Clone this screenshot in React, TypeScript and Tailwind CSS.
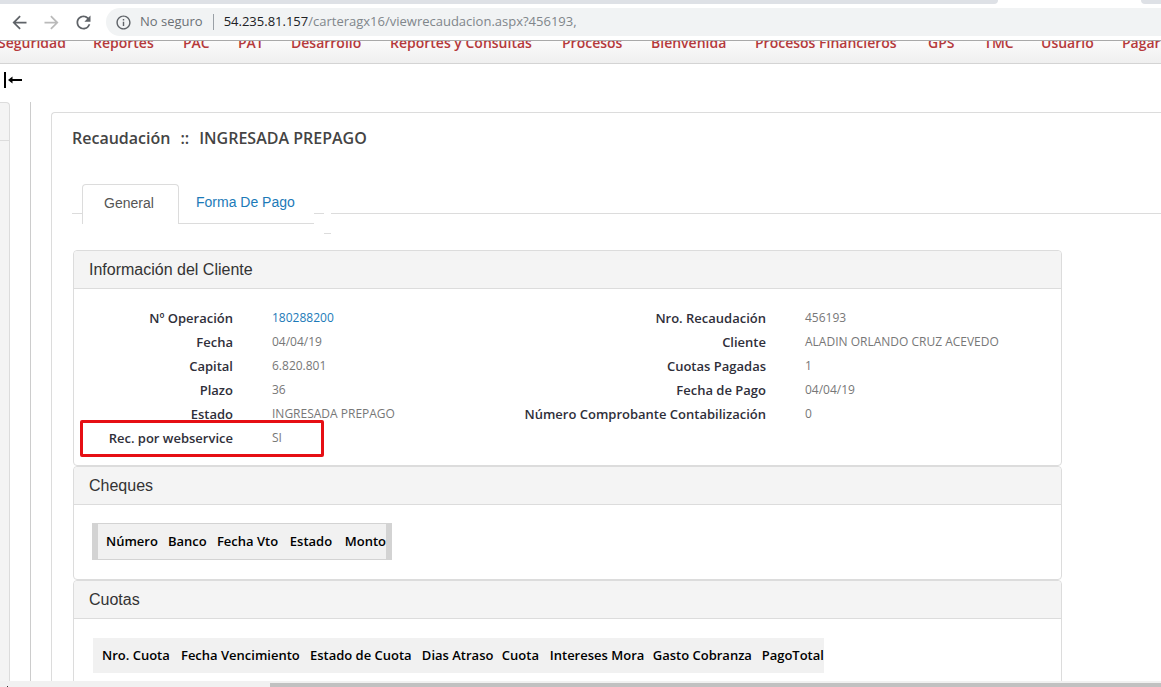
import { MdArrowBack, MdArrowForward, MdInfoOutline, MdRefresh } from "react-icons/md";
import type { ReactNode } from "react";

const menu = [
  "Seguridad",
  "Reportes",
  "PAC",
  "PAT",
  "Desarrollo",
  "Reportes y Consultas",
  "Procesos",
  "Bienvenida",
  "Procesos Financieros",
  "GPS",
  "TMC",
  "Usuario",
  "Pagaré",
];

type Field = { label: string; value: string; link?: boolean; marked?: boolean };

const leftFields: Field[] = [
  { label: "Nº Operación", value: "180288200", link: true },
  { label: "Fecha", value: "04/04/19" },
  { label: "Capital", value: "6.820.801" },
  { label: "Plazo", value: "36" },
  { label: "Estado", value: "INGRESADA PREPAGO" },
  { label: "Rec. por webservice", value: "SI", marked: true },
];

const rightFields: Field[] = [
  { label: "Nro. Recaudación", value: "456193" },
  { label: "Cliente", value: "ALADIN ORLANDO CRUZ ACEVEDO" },
  { label: "Cuotas Pagadas", value: "1" },
  { label: "Fecha de Pago", value: "04/04/19" },
  { label: "Número Comprobante Contabilización", value: "0" },
];

const chequeColumns = [
  { name: "Número", width: "w-[62px]" },
  { name: "Banco", width: "w-[49px]" },
  { name: "Fecha Vto", width: "w-[73px]" },
  { name: "Estado", width: "w-[55px]" },
  { name: "Monto", width: "w-[41px]" },
];

const cuotaColumns = [
  { name: "Nro. Cuota", width: "w-[79px]" },
  { name: "Fecha Vencimiento", width: "w-[129px]" },
  { name: "Estado de Cuota", width: "w-[112px]" },
  { name: "Dias Atraso", width: "w-[80px]" },
  { name: "Cuota", width: "w-[48px]" },
  { name: "Intereses Mora", width: "w-[103px]" },
  { name: "Gasto Cobranza", width: "w-[109px]" },
  { name: "PagoTotal", width: "w-[62px]" },
];

function BrowserBar() {
  return (
    <header className="shrink-0 border-b border-[#a9a9a9] bg-white">
      <div className="flex h-1 justify-between">
        <div className="w-[998px] rounded-br-lg bg-[#dee1e6]" />
        <div className="w-5 rounded-bl-lg bg-[#dee1e6]" />
      </div>
      <div className="flex h-9 items-center pl-[9px]">
        <button type="button" aria-label="Atrás" className="mr-[11px] text-[#5f6368]">
          <MdArrowBack size={21} />
        </button>
        <button type="button" aria-label="Adelante" className="mr-[11px] text-[#bababa]">
          <MdArrowForward size={21} />
        </button>
        <button type="button" aria-label="Recargar" className="mr-3 text-[#5f6368]">
          <MdRefresh size={21} />
        </button>
        <div className="flex h-7 flex-1 items-center rounded-l-full bg-[#f1f3f4] pl-[9px] font-['Open_Sans',sans-serif] text-[13px] text-[#80868b]">
          <MdInfoOutline size={17} className="text-[#5f6368]" />
          <span className="ml-2 text-[#6b7075]">No seguro</span>
          <span className="mx-[10px] h-4 w-px bg-[#9aa0a6]" />
          <label htmlFor="url" className="text-[#202124]">
            54.235.81.157
          </label>
          <input
            id="url"
            type="text"
            defaultValue="/carteragx16/viewrecaudacion.aspx?456193,"
            className="min-w-0 flex-1 bg-transparent outline-none"
          />
        </div>
      </div>
    </header>
  );
}

function Menu() {
  return (
    <nav className="h-[23px] shrink-0 overflow-hidden border-b border-[#d4d4d4] bg-linear-to-b from-[#fbfbfb] to-[#efefef]">
      <ul className="-mt-2 -ml-[2px] grid grid-cols-[95px_90px_55px_53px_99px_172px_89px_104px_173px_56px_57px_81px_80px] text-sm leading-5 font-semibold whitespace-nowrap text-[#b5393b]">
        {menu.map((item) => (
          <li key={item}>
            <a href="#">{item}</a>
          </li>
        ))}
      </ul>
    </nav>
  );
}

function Fields({ items, columns }: { items: Field[]; columns: string }) {
  return (
    <dl className={columns}>
      {items.map((f) => (
        <div key={f.label} className="relative col-span-2 grid grid-cols-subgrid leading-6">
          <dt className="text-right text-[13px] font-semibold whitespace-nowrap text-[#2f2f3a]">{f.label}</dt>
          <dd className="text-xs leading-6 whitespace-nowrap text-[#777]">
            {f.link ? (
              <a href="#" className="text-[#1c7ab8]">
                {f.value}
              </a>
            ) : (
              f.value
            )}
          </dd>
          {f.marked && (
            <span className="absolute -top-[6px] left-[6px] h-[37px] w-[244px] rounded-xs border-3 border-[#e60f14]" />
          )}
        </div>
      ))}
    </dl>
  );
}

function Panel({ title, children }: { title: string; children: ReactNode }) {
  return (
    <section className="rounded border border-[#dcdcdc] bg-white">
      <h2 className="h-[38px] rounded-t border-b border-[#dcdcdc] bg-[#f4f4f4] pl-[15px] font-['Liberation_Sans',sans-serif] text-base leading-[37px] text-[#333]">
        {title}
      </h2>
      {children}
    </section>
  );
}

function HeaderTable({
  columns,
  className,
}: {
  columns: { name: string; width: string }[];
  className: string;
}) {
  return (
    <table className={className}>
      <thead>
        <tr>
          {columns.map((c) => (
            <th key={c.name} className={`${c.width} p-0 text-left text-[13px] font-semibold whitespace-nowrap text-black`}>
              {c.name}
            </th>
          ))}
        </tr>
      </thead>
    </table>
  );
}

function Tabs() {
  return (
    <div role="tablist" className="flex items-start font-['Liberation_Sans',sans-serif] text-sm">
      <div className="h-[30px] w-[10px] border-b border-[#dcdcdc]" />
      <button
        type="button"
        role="tab"
        aria-selected="true"
        className="h-10 w-[97px] rounded-t border border-b-0 border-[#dcdcdc] pr-[3px] pb-1 text-[#555]"
      >
        General
      </button>
      <button
        type="button"
        role="tab"
        aria-selected="false"
        className="h-10 w-[135px] border-b border-[#dcdcdc] pb-1 pl-[17px] text-left text-[#1c7ab8]"
      >
        Forma De Pago
      </button>
      <div className="h-[30px] w-[10px] border-b border-[#dcdcdc]" />
      <div className="h-[50px] w-[7px] border-b border-[#dcdcdc]" />
      <div className="h-[30px] flex-1 border-b border-[#dcdcdc]" />
    </div>
  );
}

export default function App() {
  return (
    <div className="flex h-screen flex-col overflow-hidden bg-white font-['Open_Sans',sans-serif]">
      <BrowserBar />
      <Menu />
      <div className="flex min-h-0 flex-1 flex-col overflow-hidden">
        <div className="h-[38px] shrink-0 pt-2 pl-1">
          <button type="button" aria-label="Ocultar panel" className="block">
            <svg width="18" height="16" viewBox="0 0 18 16" fill="none" stroke="#000">
              <path d="M1 0V16" strokeWidth="2" />
              <path d="M6 8H18" strokeWidth="2" />
              <path d="M4 8L8.5 4.5V11.5Z" fill="#000" stroke="none" />
            </svg>
          </button>
        </div>
        <div className="flex min-h-0 flex-1">
          <aside className="w-[10px] shrink-0 rounded-tr border-t border-r border-[#dcdcdc] bg-[#f4f4f4]">
            <div className="h-[38px] border-b border-[#dcdcdc]" />
          </aside>
          <div className="w-[21px] shrink-0 border-r border-[#ccc]" />
          <main className="mt-[10px] ml-5 min-w-0 flex-1 overflow-hidden rounded-tl border-t border-l border-[#dcdcdc] pl-5">
            <h1 className="mt-[13px] flex gap-[10px] text-base leading-6 font-semibold text-[#444]">
              <span>Recaudación</span>
              <span>::</span>
              <span>INGRESADA PREPAGO</span>
            </h1>
            <div className="mt-[34px] h-[66px]">
              <Tabs />
            </div>
            <div className="mr-[99px] ml-px">
              <Panel title="Información del Cliente">
                <div className="flex h-[176px] pt-[17px]">
                  <Fields items={leftFields} columns="grid w-[445px] auto-rows-[24px] grid-cols-[159px_1fr] gap-x-[39px]" />
                  <Fields items={rightFields} columns="grid flex-1 auto-rows-[24px] grid-cols-[247px_1fr] gap-x-[39px]" />
                </div>
              </Panel>
              <Panel title="Cheques">
                <div className="h-[74px] pt-[18px] pl-[18px]">
                  <div className="w-[300px] border-x-6 border-y border-[#d3d3d3] bg-[#f1f1f1] pl-2">
                    <HeaderTable columns={chequeColumns} className="h-[35px] table-fixed border-collapse" />
                  </div>
                </div>
              </Panel>
              <Panel title="Cuotas">
                <div className="h-[100px] pt-[19px] pl-[19px]">
                  <div className="w-[731px] bg-[#f1f1f1] pl-[9px]">
                    <HeaderTable columns={cuotaColumns} className="h-[35px] table-fixed border-collapse" />
                  </div>
                </div>
              </Panel>
            </div>
          </main>
        </div>
      </div>
      <div className="flex h-[6px] shrink-0 items-end bg-[#f1f1f1]">
        <div className="ml-[7px] h-px w-px bg-[#333]" />
        <div className="ml-[262px] h-1 flex-1 bg-[#c1c1c1]" />
      </div>
    </div>
  );
}
